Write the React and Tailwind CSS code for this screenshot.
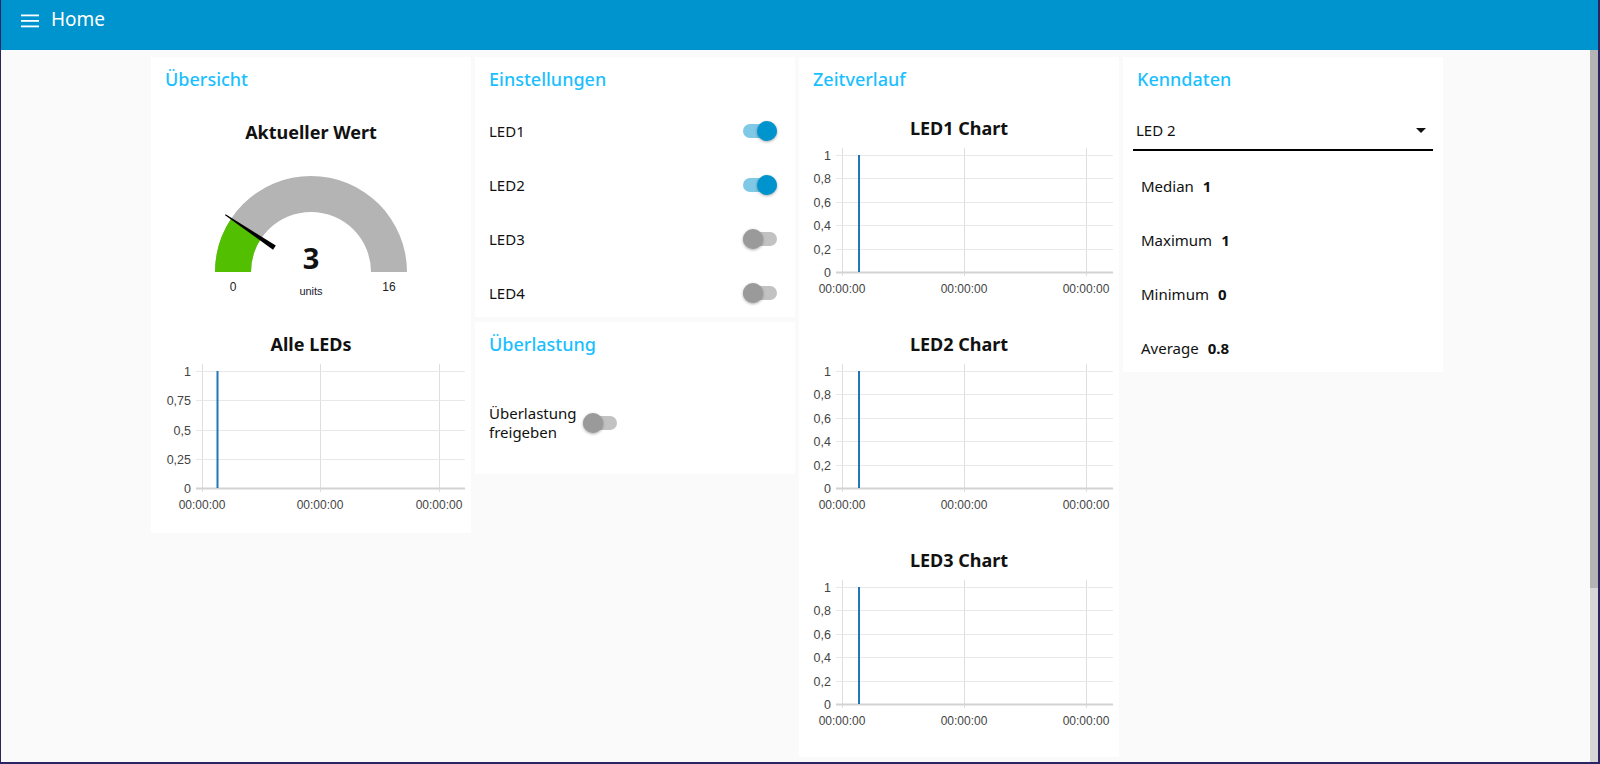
import React from "react";

const card = "w-[320px] bg-white shrink-0";
const groupTitle = "pl-[14px] pt-[10px] h-[34px] text-[18px] leading-[24px] font-medium text-[#1bbfff]";

function Toggle({on}) {
    return (
        <div className="relative w-[34px] h-[20px] flex items-center shrink-0">
            <div className={`w-[34px] h-[14px] rounded-full ${on ? "bg-[#80c9e6]" : "bg-[#c2c2c2]"}`}/>
            <div
                className={`absolute top-0 w-[20px] h-[20px] rounded-full shadow-[0_1px_3px_rgba(0,0,0,0.35)] ${
                    on ? "right-0 bg-[#0094ce]" : "left-0 bg-[#9a9a9a]"
                }`}
            />
        </div>
    );
}

function LineChart({title, labels, axis, grid, marker}) {
    const top = 15;
    const bottom = 132;
    const step = (bottom - top) / (labels.length - 1);

    return (
        <div>
            <div className="h-[24px] leading-[24px] text-center text-[18px] font-bold text-[#111]">{title}</div>
            <svg width="320" height="165" className="block">
                {grid.map((x) => (
                    <line key={"v" + x} x1={x + 0.5} x2={x + 0.5} y1={8} y2={136} stroke="#dedede"/>
                ))}
                {labels.map((l, i) => {
                    const y = Math.round(top + i * step) + 0.5;
                    const last = i === labels.length - 1;
                    return (
                        <g key={l}>
                            <line
                                x1={axis - 6}
                                x2={314}
                                y1={y}
                                y2={y}
                                stroke={last ? "#d2d2d2" : "#e8e8e8"}
                                strokeWidth={last ? 2 : 1}
                            />
                            <text
                                x={axis - 11}
                                y={y + 4.5}
                                textAnchor="end"
                                fontSize="12.5"
                                fill="#444"
                                fontFamily="'Liberation Sans', Arial, sans-serif"
                            >
                                {l}
                            </text>
                        </g>
                    );
                })}
                <line x1={marker} x2={marker} y1={top} y2={bottom} stroke="#1f77b4" strokeWidth="2"/>
                {grid.map((x) => (
                    <text
                        key={"t" + x}
                        x={x}
                        y={153}
                        textAnchor="middle"
                        fontSize="12"
                        fill="#444"
                        fontFamily="'Liberation Sans', Arial, sans-serif"
                    >
                        00:00:00
                    </text>
                ))}
            </svg>
        </div>
    );
}

function Gauge() {
    return (
        <svg width="320" height="160" className="block">
            <path d="M 64 128 A 96 96 0 0 1 256 128 L 220 128 A 60 60 0 0 0 100 128 Z" fill="#b4b4b4"/>
            <path d="M 64 128 A 96 96 0 0 1 80.2 74.6 L 110.1 94.6 A 60 60 0 0 0 100 128 Z" fill="#52c000"/>
            <polygon
                points="116,125.5 57,127.5 57,128.5 116,130.5"
                fill="#000"
                transform="rotate(33.75 160 128)"
            />
            <text x="160" y="125" textAnchor="middle" fontSize="29" fontWeight="700" fill="#111"
                  fontFamily="'Noto Sans', sans-serif">3</text>
            <text x="160" y="151" textAnchor="middle" fontSize="11" fill="#223"
                  fontFamily="'Liberation Sans', Arial, sans-serif">units</text>
            <text x="82" y="147" textAnchor="middle" fontSize="12" fill="#222"
                  fontFamily="'Liberation Sans', Arial, sans-serif">0</text>
            <text x="238" y="147" textAnchor="middle" fontSize="12" fill="#222"
                  fontFamily="'Liberation Sans', Arial, sans-serif">16</text>
        </svg>
    );
}

const leds = [
    {name: "LED1", on: true},
    {name: "LED2", on: true},
    {name: "LED3", on: false},
    {name: "LED4", on: false},
];

const stats = [
    ["Median", "1"],
    ["Maximum", "1"],
    ["Minimum", "0"],
    ["Average", "0.8"],
];

export default function App() {
    return (
        <div className="w-[1600px] h-[764px] bg-[#2a2463] pl-[1px] pr-[2px] pb-[2px] overflow-hidden font-['Noto_Sans',sans-serif]">
            <div className="h-full flex flex-col">
                <header className="h-[50px] shrink-0 bg-[#0094ce] flex items-start pt-[7px] pl-[20px] text-white">
                    <svg width="18" height="14" viewBox="0 0 18 14" className="mt-[7px]">
                        <rect x="0" y="0.5" width="18" height="1.8" fill="#fff"/>
                        <rect x="0" y="6" width="18" height="1.8" fill="#fff"/>
                        <rect x="0" y="11.5" width="18" height="1.8" fill="#fff"/>
                    </svg>
                    <span className="ml-[12px] text-[19px] leading-[24px]">Home</span>
                </header>

                <div className="flex-1 flex min-h-0">
                    <main className="flex-1 bg-[#fafafa] overflow-hidden flex justify-center items-start gap-[4px] pt-[7px] pl-[3px]">
                        {/* Übersicht */}
                        <section className={`${card} pb-[12px]`}>
                            <div className={groupTitle}>Übersicht</div>
                            <div className="mt-[29px] h-[24px] leading-[24px] text-center text-[18px] font-bold text-[#111]">
                                Aktueller Wert
                            </div>
                            <Gauge/>
                            <div className="mt-[28px]">
                                <LineChart
                                    title="Alle LEDs"
                                    labels={["1", "0,75", "0,5", "0,25", "0"]}
                                    axis={51}
                                    grid={[51, 169, 288]}
                                    marker={66.5}
                                />
                            </div>
                        </section>

                        {/* Einstellungen + Überlastung */}
                        <div className="flex flex-col gap-[5px] w-[320px] shrink-0">
                            <section className="bg-white h-[260px]">
                                <div className={groupTitle}>Einstellungen</div>
                                <div className="mt-[16px] flex flex-col gap-[6px]">
                                    {leds.map((l) => (
                                        <div key={l.name}
                                             className="h-[48px] flex items-center justify-between pl-[14px] pr-[18px] text-[15px] text-[#111]">
                                            <span>{l.name}</span>
                                            <Toggle on={l.on}/>
                                        </div>
                                    ))}
                                </div>
                            </section>
                            <section className="bg-white h-[152px]">
                                <div className={groupTitle}>Überlastung</div>
                                <div className="mt-[43px] h-[48px] flex items-center pl-[14px] text-[15px] leading-[19px] text-[#111]">
                                    <span className="w-[94px] shrink-0">Überlastung freigeben</span>
                                    <Toggle on={false}/>
                                </div>
                            </section>
                        </div>

                        {/* Zeitverlauf */}
                        <section className={card}>
                            <div className={groupTitle}>Zeitverlauf</div>
                            <div className="mt-[25px] flex flex-col gap-[27px] pb-[20px]">
                                {["LED1 Chart", "LED2 Chart", "LED3 Chart"].map((t) => (
                                    <LineChart
                                        key={t}
                                        title={t}
                                        labels={["1", "0,8", "0,6", "0,4", "0,2", "0"]}
                                        axis={43}
                                        grid={[43, 165, 287]}
                                        marker={60}
                                    />
                                ))}
                            </div>
                        </section>

                        {/* Kenndaten */}
                        <section className={`${card} h-[315px]`}>
                            <div className={groupTitle}>Kenndaten</div>
                            <div className="mx-[10px] mt-[20px] h-[40px] border-b-2 border-black flex items-center justify-between pl-[3px] pr-[7px] text-[15px] text-[#111]">
                                <span>LED 2</span>
                                <svg width="10" height="5" viewBox="0 0 10 5">
                                    <path d="M0 0 L10 0 L5 5 Z" fill="#111"/>
                                </svg>
                            </div>
                            <div className="mt-[11px] flex flex-col gap-[6px]">
                                {stats.map(([k, v]) => (
                                    <div key={k} className="h-[48px] flex items-center pl-[18px] text-[15px] text-[#111]">
                                        <span>{k}</span>
                                        <span className="ml-[9px] font-bold">{v}</span>
                                    </div>
                                ))}
                            </div>
                        </section>
                    </main>

                    <div className="w-[8px] shrink-0 flex flex-col">
                        <div className="h-[538px] bg-[#b4b4b4]"/>
                        <div className="flex-1 bg-[#d6d6d6]"/>
                    </div>
                </div>
            </div>
        </div>
    );
}
